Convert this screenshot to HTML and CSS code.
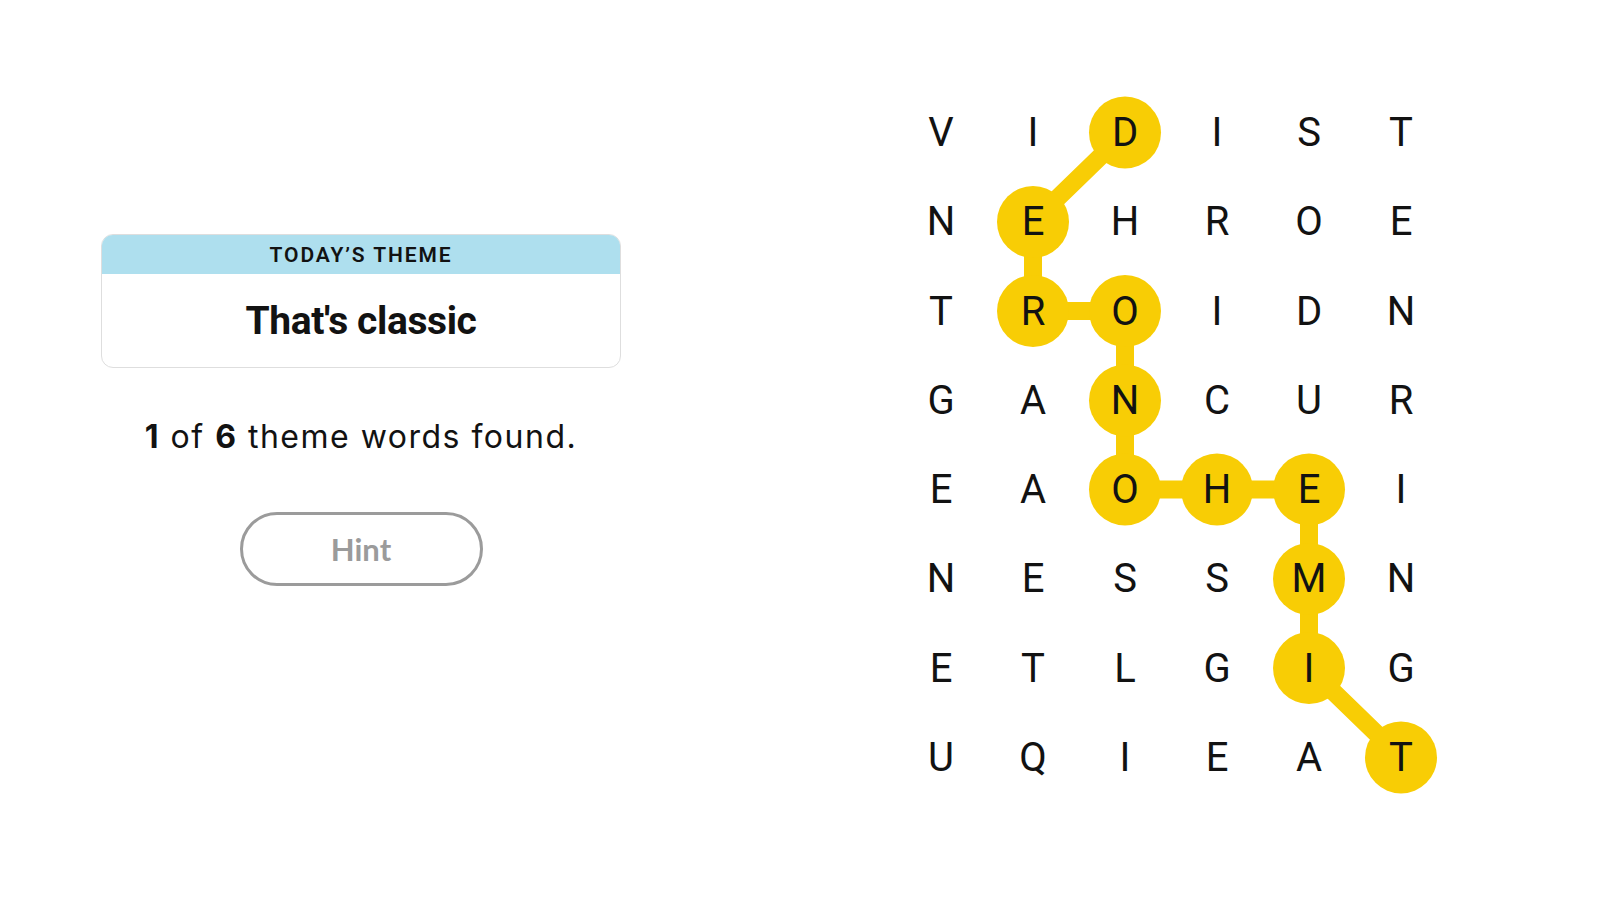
FILE: index.html
```html
<!DOCTYPE html>
<html lang="en">
<head>
<meta charset="utf-8">
<title>Strands</title>
<link rel="stylesheet" href="styles.css">
</head>
<body>
<main class="game">
  <section class="sidebar">
    <div class="theme-card">
      <div class="theme-header">TODAY’S THEME</div>
      <div class="theme-body">That's classic</div>
    </div>
    <p class="progress"><b>1</b> of <b>6</b> theme words found.</p>
    <button class="hint" type="button">Hint</button>
  </section>
  <section class="board-wrap">
    <div class="board">
      <svg class="trail" width="552" height="714" viewBox="0 0 552 714" aria-hidden="true">
        <polyline points="230,44.6 138,133.9 138,223.1 230,223.1 230,312.4 230,401.6 322,401.6 414,401.6 414,490.9 414,580.1 506,669.4" fill="none" stroke="#f8cd05" stroke-width="18" stroke-linejoin="round" stroke-linecap="round"/>
        <g fill="#f8cd05">
          <circle cx="230" cy="44.6" r="36"/>
          <circle cx="138" cy="133.9" r="36"/>
          <circle cx="138" cy="223.1" r="36"/>
          <circle cx="230" cy="223.1" r="36"/>
          <circle cx="230" cy="312.4" r="36"/>
          <circle cx="230" cy="401.6" r="36"/>
          <circle cx="322" cy="401.6" r="36"/>
          <circle cx="414" cy="401.6" r="36"/>
          <circle cx="414" cy="490.9" r="36"/>
          <circle cx="414" cy="580.1" r="36"/>
          <circle cx="506" cy="669.4" r="36"/>
        </g>
      </svg>
      <div class="cell">V</div><div class="cell">I</div><div class="cell">D</div><div class="cell">I</div><div class="cell">S</div><div class="cell">T</div>
      <div class="cell">N</div><div class="cell">E</div><div class="cell">H</div><div class="cell">R</div><div class="cell">O</div><div class="cell">E</div>
      <div class="cell">T</div><div class="cell">R</div><div class="cell">O</div><div class="cell">I</div><div class="cell">D</div><div class="cell">N</div>
      <div class="cell">G</div><div class="cell">A</div><div class="cell">N</div><div class="cell">C</div><div class="cell">U</div><div class="cell">R</div>
      <div class="cell">E</div><div class="cell">A</div><div class="cell">O</div><div class="cell">H</div><div class="cell">E</div><div class="cell">I</div>
      <div class="cell">N</div><div class="cell">E</div><div class="cell">S</div><div class="cell">S</div><div class="cell">M</div><div class="cell">N</div>
      <div class="cell">E</div><div class="cell">T</div><div class="cell">L</div><div class="cell">G</div><div class="cell">I</div><div class="cell">G</div>
      <div class="cell">U</div><div class="cell">Q</div><div class="cell">I</div><div class="cell">E</div><div class="cell">A</div><div class="cell">T</div>
    </div>
  </section>
</main>
</body>
</html>
```

FILE: styles.css
```css
html, body {
  margin: 0;
  padding: 0;
  background: #ffffff;
}

body {
  width: 1600px;
  height: 900px;
  overflow: hidden;
  color: #121212;
  font-family: "Liberation Sans", Arial, sans-serif;
}

.game {
  display: flex;
  height: 900px;
}

.sidebar {
  width: 722px;
  box-sizing: border-box;
  padding-top: 234px;
  display: flex;
  flex-direction: column;
  align-items: center;
}

.theme-card {
  width: 520px;
  height: 134px;
  box-sizing: border-box;
  border: 1px solid #dedede;
  border-radius: 12px;
  overflow: hidden;
  display: flex;
  flex-direction: column;
  background: #fff;
}

.theme-header {
  height: 39px;
  flex: none;
  background: #aedfee;
  display: flex;
  align-items: center;
  justify-content: center;
  font-family: "Roboto", "Liberation Sans", sans-serif;
  font-weight: 600;
  font-size: 21px;
  letter-spacing: 1.9px;
  color: #121212;
}

.theme-body {
  flex: 1;
  display: flex;
  align-items: center;
  justify-content: center;
  font-family: "Roboto", "Liberation Sans", sans-serif;
  font-weight: 700;
  font-size: 39px;
  letter-spacing: -0.4px;
  color: #121212;
}

.progress {
  margin: 51px 0 0;
  font-family: "Inter", "Liberation Sans", sans-serif;
  font-size: 32px;
  line-height: 36px;
  letter-spacing: 1.5px;
  color: #121212;
}

.progress b {
  font-weight: 700;
}

.hint {
  margin-top: 57px;
  width: 243px;
  height: 74px;
  box-sizing: border-box;
  border: 3px solid #9b9b9b;
  border-radius: 37px;
  background: #fff;
  color: #9b9b9b;
  font-family: "Lato", "Liberation Sans", sans-serif;
  font-weight: 700;
  font-size: 31px;
  padding: 0;
}

.board-wrap {
  padding-left: 173px;
  padding-top: 88px;
}

.board {
  position: relative;
  display: grid;
  grid-template-columns: repeat(6, 92px);
  grid-auto-rows: 89.25px;
}

.trail {
  position: absolute;
  left: 0;
  top: 0;
}

.cell {
  position: relative;
  z-index: 1;
  display: flex;
  align-items: center;
  justify-content: center;
  font-family: "Roboto", "Liberation Sans", sans-serif;
  font-size: 40px;
  font-weight: 400;
  color: #121212;
}
```
